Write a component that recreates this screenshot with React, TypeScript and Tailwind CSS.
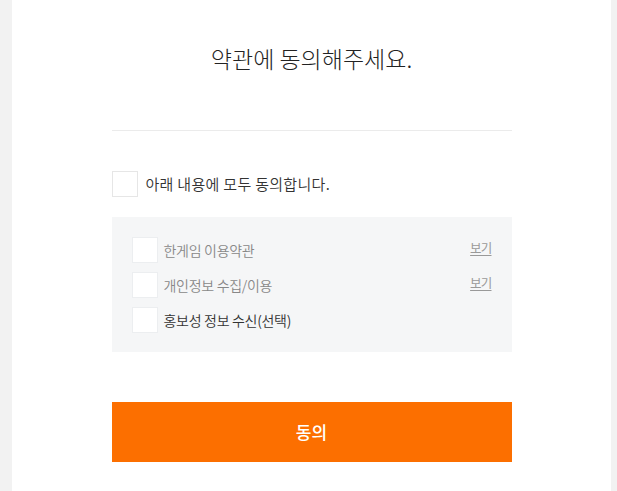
import React from "react";

const font = { fontFamily: '"Noto Sans CJK KR", "Noto Sans", sans-serif' };

const items = [
  { label: "한게임 이용약관", view: true, tone: "text-[#888]" },
  { label: "개인정보 수집/이용", view: true, tone: "text-[#888]" },
  { label: "홍보성 정보 수신(선택)", view: false, tone: "text-[#333]" },
];

function Box({ outer }: { outer?: boolean }) {
  return (
    <span
      className={
        "block h-[26px] w-[26px] shrink-0 bg-white border " +
        (outer ? "border-[#e6e6e6]" : "border-[#eceef0]")
      }
    />
  );
}

export default function App() {
  return (
    <div className="flex min-h-[491px] bg-[#f2f2f2]" style={font}>
      <div className="ml-[12px] w-[599px] bg-white pt-[40px] pb-[29px]">
        <div className="mx-auto w-[400px]">
          <h1 className="text-center text-[23px] leading-[36px] text-[#222] font-light">
            약관에 동의해주세요.
          </h1>

          <div className="mt-[54px] h-px bg-[#ebebeb]" />

          <label className="mt-[40px] flex items-center gap-[8px]">
            <Box outer />
            <span className="text-[15px] leading-[26px] tracking-[0.3px] text-[#333] font-[350]">
              아래 내용에 모두 동의합니다.
            </span>
          </label>

          <div className="mt-[20px] flex flex-col gap-[9px] bg-[#f5f6f7] pl-[20px] pr-[20px] pt-[20px] pb-[19px]">
            {items.map((it) => (
              <div key={it.label} className="flex items-center">
                <Box />
                <span
                  className={
                    "ml-[6px] text-[14px] leading-[26px] tracking-[-0.3px] font-[350] " + it.tone
                  }
                >
                  {it.label}
                </span>
                {it.view && (
                  <a className="ml-auto mb-[4px] text-[12.5px] leading-[20px] tracking-[-0.8px] text-[#999] underline underline-offset-2">
                    보기
                  </a>
                )}
              </div>
            ))}
          </div>

          <button className="mt-[50px] flex h-[60px] w-full items-center justify-center bg-[#fc6f00] text-[17px] font-medium text-white">
            동의
          </button>
        </div>
      </div>
    </div>
  );
}
